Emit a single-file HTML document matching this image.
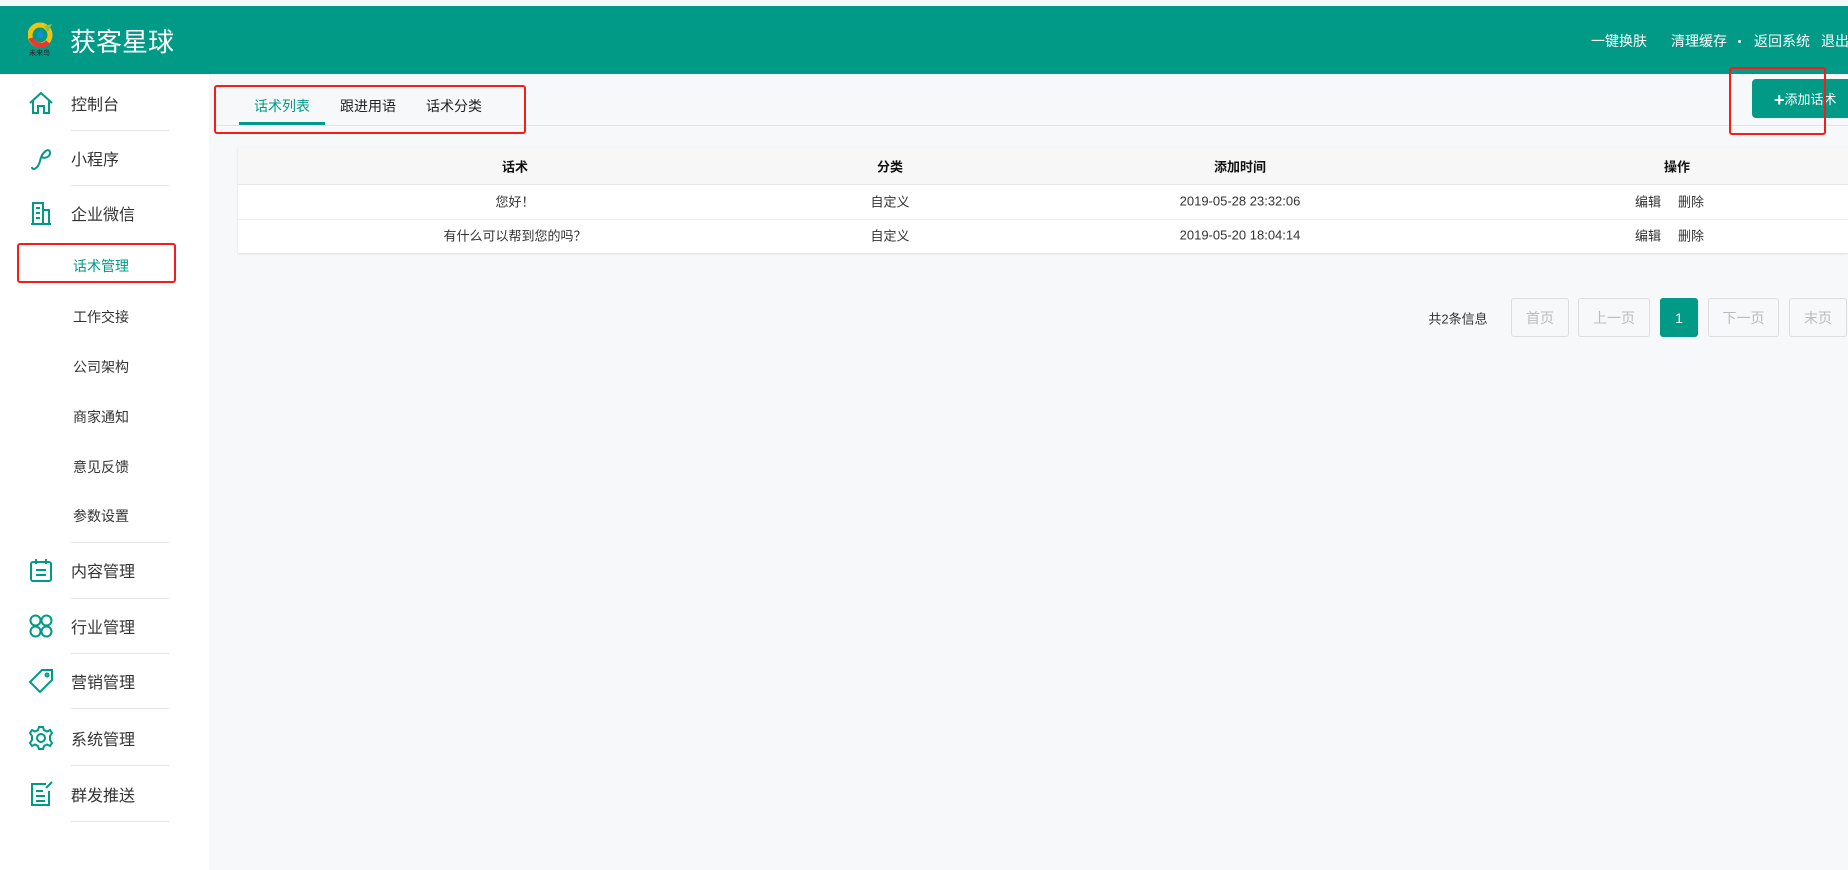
<!DOCTYPE html>
<html><head><meta charset="utf-8"><style>
*{margin:0;padding:0;box-sizing:border-box}
body{width:1848px;height:870px;overflow:hidden;background:#f7f8fa;font-family:"Liberation Sans","Noto Sans CJK SC",sans-serif;color:#333;position:relative}
.a{position:absolute;white-space:nowrap}
.hdr{position:absolute;left:0;top:6px;width:1848px;height:68px;background:#009a86}
.side{position:absolute;left:0;top:74px;width:209px;height:796px;background:#fff}
.mi{position:absolute;left:71px;font-size:16px;color:#333;transform:translateY(-50%)}
.si{position:absolute;left:73px;font-size:14px;color:#333;transform:translateY(-50%)}
.dv{position:absolute;left:71px;width:98px;height:1px;background:#e5e5e5}
.ic{position:absolute;left:28px;width:26px;height:26px;transform:translateY(-50%)}
.red{position:absolute;border:2px solid #f51c1c;border-radius:3px}
.c{position:absolute;transform:translate(-50%,-50%);font-size:13px;white-space:nowrap}
.pg{position:absolute;top:298px;height:39px;border:1px solid #ddd;border-radius:3px;color:#bbb;font-size:14px;display:flex;align-items:center;justify-content:center;background:#f7f8fa}
</style></head><body>
<div class="hdr"></div>
<svg class="a" style="left:28px;top:22px" width="26" height="34" viewBox="0 0 26 34"><circle cx="12" cy="13" r="10" fill="none" stroke="#f4c20d" stroke-width="5"/><path d="M3 16 A10 10 0 0 0 20 20" stroke="#e53935" stroke-width="5" fill="none"/><path d="M16 4 L24 2 L20 10Z" fill="#8bc34a"/><circle cx="12" cy="13" r="3" fill="#1e88e5"/><text x="1" y="33" font-size="7" fill="#222">未来鸟</text></svg>
<div class="a" style="left:70px;top:22px;font-size:26px;color:#fff">获客星球</div>
<div class="a" style="left:1591px;top:31px;font-size:14px;color:#fff">一键换肤</div>
<div class="a" style="left:1671px;top:31px;font-size:14px;color:#fff">清理缓存</div>
<div class="a" style="left:1738px;top:40px;width:3px;height:3px;border-radius:50%;background:#fff"></div>
<div class="a" style="left:1754px;top:31px;font-size:14px;color:#fff">返回系统</div>
<div class="a" style="left:1821px;top:31px;font-size:14px;color:#fff">退出</div>

<div class="side"></div>
<svg class="ic" style="top:103px" viewBox="0 0 26 26" fill="none" stroke="#009a86" stroke-width="2"><path d="M2 13 L13 3 L24 13 M5 11 V23 H10 V16 H16 V23 H21 V11"/></svg>
<div class="mi" style="top:103px">控制台</div><div class="dv" style="top:130px"></div>
<svg class="ic" style="top:158px" viewBox="0 0 26 26" fill="none" stroke="#009a86" stroke-width="2"><path d="M4 22 C4 26 10 24 12 16 C14 6 22 2 22 8 C22 12 16 14 14 12"/></svg>
<div class="mi" style="top:158px">小程序</div><div class="dv" style="top:185px"></div>
<svg class="ic" style="top:213px" viewBox="0 0 26 26" fill="none" stroke="#009a86" stroke-width="2"><path d="M3 24 H23 M5 24 V3 H15 V24 M15 10 H21 V24 M8 8 H12 M8 13 H12 M8 18 H12"/></svg>
<div class="mi" style="top:213px">企业微信</div>
<div class="si" style="top:266px;color:#009a86">话术管理</div>
<div class="si" style="top:317px">工作交接</div>
<div class="si" style="top:367px">公司架构</div>
<div class="si" style="top:417px">商家通知</div>
<div class="si" style="top:467px">意见反馈</div>
<div class="si" style="top:516px">参数设置</div>
<div class="dv" style="top:542px"></div>
<svg class="ic" style="top:570px" viewBox="0 0 26 26" fill="none" stroke="#009a86" stroke-width="2"><rect x="3" y="5" width="20" height="19" rx="2"/><path d="M8 2 V7 M18 2 V7 M8 13 H18 M8 18 H18"/></svg>
<div class="mi" style="top:570px">内容管理</div><div class="dv" style="top:598px"></div>
<svg class="ic" style="top:626px" viewBox="0 0 26 26" fill="none" stroke="#009a86" stroke-width="2"><circle cx="7.5" cy="7.5" r="5"/><circle cx="18.5" cy="7.5" r="5"/><circle cx="7.5" cy="18.5" r="5"/><circle cx="18.5" cy="18.5" r="5"/></svg>
<div class="mi" style="top:626px">行业管理</div><div class="dv" style="top:653px"></div>
<svg class="ic" style="top:681px" viewBox="0 0 26 26" fill="none" stroke="#009a86" stroke-width="2"><path d="M14 2 H24 V12 L12 24 L2 14Z"/><circle cx="19" cy="7" r="1.5"/></svg>
<div class="mi" style="top:681px">营销管理</div><div class="dv" style="top:708px"></div>
<svg class="ic" style="top:738px" viewBox="0 0 26 26" fill="none" stroke="#009a86" stroke-width="2"><circle cx="13" cy="13" r="4"/><path d="M11 2 H15 L16 5 L19 6.5 L22 5 L24 8 L22 11 V15 L24 18 L22 21 L19 19.5 L16 21 L15 24 H11 L10 21 L7 19.5 L4 21 L2 18 L4 15 V11 L2 8 L4 5 L7 6.5 L10 5Z"/></svg>
<div class="mi" style="top:738px">系统管理</div><div class="dv" style="top:765px"></div>
<svg class="ic" style="top:794px" viewBox="0 0 26 26" fill="none" stroke="#009a86" stroke-width="2"><path d="M18 3 H4 V24 H21 V10 M8 10 H15 M8 15 H17 M8 20 H17 M18 7 L24 1"/></svg>
<div class="mi" style="top:794px">群发推送</div><div class="dv" style="top:821px"></div>

<div class="a" style="left:214px;top:125px;width:1634px;height:1px;background:#e3e3e3"></div>
<div class="c" style="left:282px;top:106px;font-size:14px;color:#009a86">话术列表</div>
<div class="a" style="left:239px;top:122px;width:86px;height:3px;background:#009a86"></div>
<div class="c" style="left:368px;top:106px;font-size:14px;color:#222">跟进用语</div>
<div class="c" style="left:454px;top:106px;font-size:14px;color:#222">话术分类</div>
<div class="a" style="left:1752px;top:79px;width:100px;height:39px;background:#009a86;border-radius:4px;color:#fff;font-size:13px;padding:10px 0 0 22px"><b style="font-size:18px;vertical-align:-2px">+</b>添加话术</div>

<div class="a" style="left:238px;top:147px;width:1610px;height:106px;background:#fff;box-shadow:0 1px 2px rgba(0,0,0,.12)"></div>
<div class="a" style="left:238px;top:147px;width:1610px;height:38px;background:#f7f7f7;border-bottom:1px solid #e8e8e8"></div>
<div class="a" style="left:238px;top:219px;width:1610px;height:1px;background:#eee"></div>
<div class="c" style="left:515px;top:166px;font-weight:bold;color:#111">话术</div>
<div class="c" style="left:890px;top:166px;font-weight:bold;color:#111">分类</div>
<div class="c" style="left:1240px;top:166px;font-weight:bold;color:#111">添加时间</div>
<div class="c" style="left:1677px;top:166px;font-weight:bold;color:#111">操作</div>
<div class="c" style="left:515px;top:201px">您好！</div>
<div class="c" style="left:890px;top:201px">自定义</div>
<div class="c" style="left:1240px;top:201px">2019-05-28 23:32:06</div>
<div class="c" style="left:1648px;top:201px">编辑</div><div class="c" style="left:1691px;top:201px">删除</div>
<div class="c" style="left:515px;top:235px">有什么可以帮到您的吗？</div>
<div class="c" style="left:890px;top:235px">自定义</div>
<div class="c" style="left:1240px;top:235px">2019-05-20 18:04:14</div>
<div class="c" style="left:1648px;top:235px">编辑</div><div class="c" style="left:1691px;top:235px">删除</div>

<div class="c" style="left:1458px;top:318px;color:#333">共2条信息</div>
<div class="pg" style="left:1511px;width:58px">首页</div>
<div class="pg" style="left:1578px;width:72px">上一页</div>
<div class="pg" style="left:1660px;width:38px;background:#009a86;border-color:#009a86;color:#fff">1</div>
<div class="pg" style="left:1708px;width:71px">下一页</div>
<div class="pg" style="left:1789px;width:58px">末页</div>

<div class="red" style="left:17px;top:243px;width:159px;height:40px"></div>
<div class="red" style="left:214px;top:85px;width:312px;height:49px"></div>
<div class="red" style="left:1729px;top:67px;width:97px;height:68px"></div>
</body></html>
